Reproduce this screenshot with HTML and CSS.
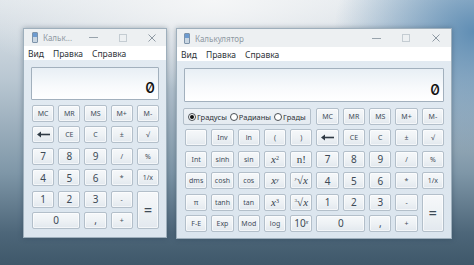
FILE: index.html
```html
<!DOCTYPE html>
<html lang="ru">
<head>
<meta charset="utf-8">
<title>Калькулятор</title>
<link rel="stylesheet" href="styles.css">
</head>
<body>
<div class="desk">
  <div class="win win-small">
    <div class="titlebar">
      <span class="app-ico"><i></i></span>
      <span class="title">Кальк...</span>
      <span class="ctrls">
        <span class="ctl"><svg width="9" height="9" viewBox="0 0 9 9"><path d="M0 4.5H9" stroke="#98a3ac" stroke-width="1"/></svg></span>
        <span class="ctl"><svg width="8" height="8" viewBox="0 0 8 8"><rect x="0.5" y="0.5" width="7" height="7" fill="none" stroke="#c4ccd2"/></svg></span>
        <span class="ctl"><svg width="8" height="8" viewBox="0 0 8 8"><path d="M0.5 0.5L7.5 7.5M7.5 0.5L0.5 7.5" stroke="#8e99a3" stroke-width="1"/></svg></span>
      </span>
    </div>
    <div class="menubar"><span>Вид</span><span>Правка</span><span>Справка</span></div>
    <div class="content">
      <div class="display"><span class="num">0</span></div>
      <div class="grid grid5">
        <button class="b sm">MC</button><button class="b sm">MR</button><button class="b sm">MS</button><button class="b sm">M+</button><button class="b sm">M-</button>
        <button class="b"><svg width="13" height="7" viewBox="0 0 13 7"><path d="M3 3.5H13" stroke="#2f3a44" stroke-width="1.6"/><path d="M0 3.5L4 0.5V6.5Z" fill="#2f3a44"/></svg></button><button class="b sm">CE</button><button class="b sm">C</button><button class="b sm">±</button><button class="b sm">√</button>
        <button class="b dg">7</button><button class="b dg">8</button><button class="b dg">9</button><button class="b sm">/</button><button class="b sm">%</button>
        <button class="b dg">4</button><button class="b dg">5</button><button class="b dg">6</button><button class="b sm">*</button><button class="b sm">1/x</button>
        <button class="b dg">1</button><button class="b dg">2</button><button class="b dg">3</button><button class="b sm">-</button><button class="b eq">=</button>
        <button class="b dg zero">0</button><button class="b dg">,</button><button class="b sm">+</button>
      </div>
    </div>
  </div>

  <div class="win win-big">
    <div class="titlebar">
      <span class="app-ico"><i></i></span>
      <span class="title">Калькулятор</span>
      <span class="ctrls">
        <span class="ctl"><svg width="9" height="9" viewBox="0 0 9 9"><path d="M0 4.5H9" stroke="#98a3ac" stroke-width="1"/></svg></span>
        <span class="ctl"><svg width="8" height="8" viewBox="0 0 8 8"><rect x="0.5" y="0.5" width="7" height="7" fill="none" stroke="#c4ccd2"/></svg></span>
        <span class="ctl"><svg width="8" height="8" viewBox="0 0 8 8"><path d="M0.5 0.5L7.5 7.5M7.5 0.5L0.5 7.5" stroke="#8e99a3" stroke-width="1"/></svg></span>
      </span>
    </div>
    <div class="menubar"><span>Вид</span><span>Правка</span><span>Справка</span></div>
    <div class="content">
      <div class="display"><span class="num">0</span></div>
      <div class="grid grid10">
        <div class="radios">
          <span class="rb on"></span><span class="rl">Градусы</span>
          <span class="rb"></span><span class="rl">Радианы</span>
          <span class="rb"></span><span class="rl">Грады</span>
        </div>
        <button class="b sm">MC</button><button class="b sm">MR</button><button class="b sm">MS</button><button class="b sm">M+</button><button class="b sm">M-</button>

        <button class="b"></button><button class="b sm">Inv</button><button class="b sm">ln</button><button class="b sm">(</button><button class="b sm">)</button>
        <button class="b"><svg width="13" height="7" viewBox="0 0 13 7"><path d="M3 3.5H13" stroke="#2f3a44" stroke-width="1.6"/><path d="M0 3.5L4 0.5V6.5Z" fill="#2f3a44"/></svg></button><button class="b sm">CE</button><button class="b sm">C</button><button class="b sm">±</button><button class="b sm">√</button>

        <button class="b sm">Int</button><button class="b sm">sinh</button><button class="b sm">sin</button><button class="b mth"><i>x</i><sup>2</sup></button><button class="b mth">n!</button>
        <button class="b dg">7</button><button class="b dg">8</button><button class="b dg">9</button><button class="b sm">/</button><button class="b sm">%</button>

        <button class="b sm">dms</button><button class="b sm">cosh</button><button class="b sm">cos</button><button class="b mth"><i>x</i><sup><i>y</i></sup></button><button class="b mth"><span class="pre"><i>y</i></span>√<i>x</i></button>
        <button class="b dg">4</button><button class="b dg">5</button><button class="b dg">6</button><button class="b sm">*</button><button class="b sm">1/x</button>

        <button class="b sm">π</button><button class="b sm">tanh</button><button class="b sm">tan</button><button class="b mth"><i>x</i><sup>3</sup></button><button class="b mth"><span class="pre">3</span>√<i>x</i></button>
        <button class="b dg">1</button><button class="b dg">2</button><button class="b dg">3</button><button class="b sm">-</button><button class="b eq">=</button>

        <button class="b sm">F-E</button><button class="b sm">Exp</button><button class="b sm">Mod</button><button class="b sm">log</button><button class="b ten">10<sup><i>x</i></sup></button>
        <button class="b dg zero">0</button><button class="b dg">,</button><button class="b sm">+</button>
      </div>
    </div>
  </div>
</div>
</body>
</html>
```

FILE: styles.css
```css
* { box-sizing: border-box; }
html, body { margin: 0; padding: 0; }
body {
  width: 474px;
  height: 265px;
  overflow: hidden;
  font-family: "Noto Sans", "Open Sans", sans-serif;
  background:
    radial-gradient(ellipse 140px 120px at 100% 12%, rgba(90,138,178,0.95), rgba(90,138,178,0) 100%),
    radial-gradient(ellipse 260px 90px at 45% 0%, rgba(245,246,247,1), rgba(245,246,247,0) 100%),
    linear-gradient(to bottom, #dfe5ea 0%, #b9c7d2 30%, #7f97a8 65%, #4d6679 88%, #3f586a 100%);
}
.desk {
  display: flex;
  align-items: flex-start;
  padding: 28px 0 0 23px;
  gap: 9px;
}
.win {
  border: 1px solid #9eafbc;
  background: linear-gradient(to bottom, #e3ebf2, #dbe5ee);
  box-shadow: 0 0 5px rgba(30,50,70,0.35);
  display: flex;
  flex-direction: column;
}
.win-small { width: 144px; height: 210px; }
.win-big { width: 276px; height: 211px; }
.titlebar {
  display: flex;
  align-items: center;
  background: #edf0f2;
  height: 17px;
  padding-left: 8px;
}
.win-big .titlebar { height: 18px; padding-left: 7px; }
.app-ico {
  width: 6px;
  height: 11px;
  border-radius: 1px;
  background: linear-gradient(to bottom, #6d9bd0 0 40%, #c9d6e2 40% 100%);
  border: 1px solid #7d93aa;
  display: flex;
  margin-right: 5px;
}
.title {
  font-size: 8px;
  color: #8f99a2;
  flex: 1;
  white-space: nowrap;
}
.ctrls { display: flex; }
.ctl {
  width: 29px;
  height: 15px;
  display: flex;
  align-items: center;
  justify-content: center;
}
.win-big .ctl { width: 30px; }
.menubar {
  height: 14px;
  background: #fff;
  display: flex;
  align-items: center;
  gap: 9px;
  padding-left: 4px;
  font-size: 8.5px;
  color: #2c3237;
}
.content {
  flex: 1;
  padding: 7px 7px 0 7px;
}
.display {
  height: 33px;
  border: 1px solid #a2b0bd;
  border-radius: 1px;
  background: linear-gradient(to bottom, #e8eff5 0%, #f8fafc 60%, #ffffff 100%);
  display: flex;
  align-items: flex-end;
  justify-content: flex-end;
  padding: 0 3px 4px 0;
}
.win-big .display { height: 34px; }
.num {
  font-family: Inter, "DejaVu Sans", sans-serif;
  font-feature-settings: "zero" 1;
  font-weight: 500;
  font-size: 15px;
  line-height: 15px;
  color: #111;
}
.grid {
  display: grid;
  grid-auto-rows: 17px;
  row-gap: 4.4px;
  column-gap: 4px;
  margin-top: 5px;
}
.grid5 { grid-template-columns: repeat(5, 1fr); margin-left: 1px; }
.grid10 { grid-template-columns: repeat(10, 1fr); margin-top: 6px; margin-left: 1px; }
.b {
  margin: 0;
  padding: 0;
  border: 1px solid #b3bfca;
  border-radius: 2px;
  background: linear-gradient(to bottom, #f6f8fa 0%, #eef2f5 50%, #e2e8ee 100%);
  box-shadow: inset 0 0 0 1px rgba(255,255,255,0.6);
  font-family: "Noto Sans", "Open Sans", sans-serif;
  color: #3f4d5a;
  display: flex;
  align-items: center;
  justify-content: center;
  line-height: 1;
}
.sm { font-size: 7px; }
.dg { font-size: 10px; color: #3d4a56; }
.eq { grid-row: span 2; font-size: 14px; font-weight: 600; color: #3d4a56; }
.zero { grid-column: span 2; }
.mth {
  font-family: "Liberation Serif", "DejaVu Serif", serif;
  font-size: 11px;
  color: #34404b;
}
.mth sup, .ten sup { font-size: 6px; position: relative; top: -1px; vertical-align: super; line-height: 0; }
.mth .pre { font-size: 5px; align-self: flex-start; margin-top: 3px; }
.ten { font-size: 10px; color: #3d4a56; }
.radios {
  grid-column: span 5;
  border: 1px solid #b3bfca;
  border-radius: 2px;
  background: linear-gradient(to bottom, #eef2f6, #e4eaf0);
  display: flex;
  align-items: center;
  padding: 0 0 0 4px;
  margin-left: -2px;
  margin-right: 1px;
}
.rb {
  width: 8px;
  height: 8px;
  border-radius: 50%;
  border: 1px solid #4a4f55;
  background: #fff;
  margin-right: 1px;
  display: flex;
  align-items: center;
  justify-content: center;
  flex: none;
}
.rb.on::after {
  content: "";
  width: 4px;
  height: 4px;
  border-radius: 50%;
  background: #111;
}
.rl {
  font-size: 7.5px;
  color: #2c3237;
  margin-right: 3px;
  white-space: nowrap;
}
```
